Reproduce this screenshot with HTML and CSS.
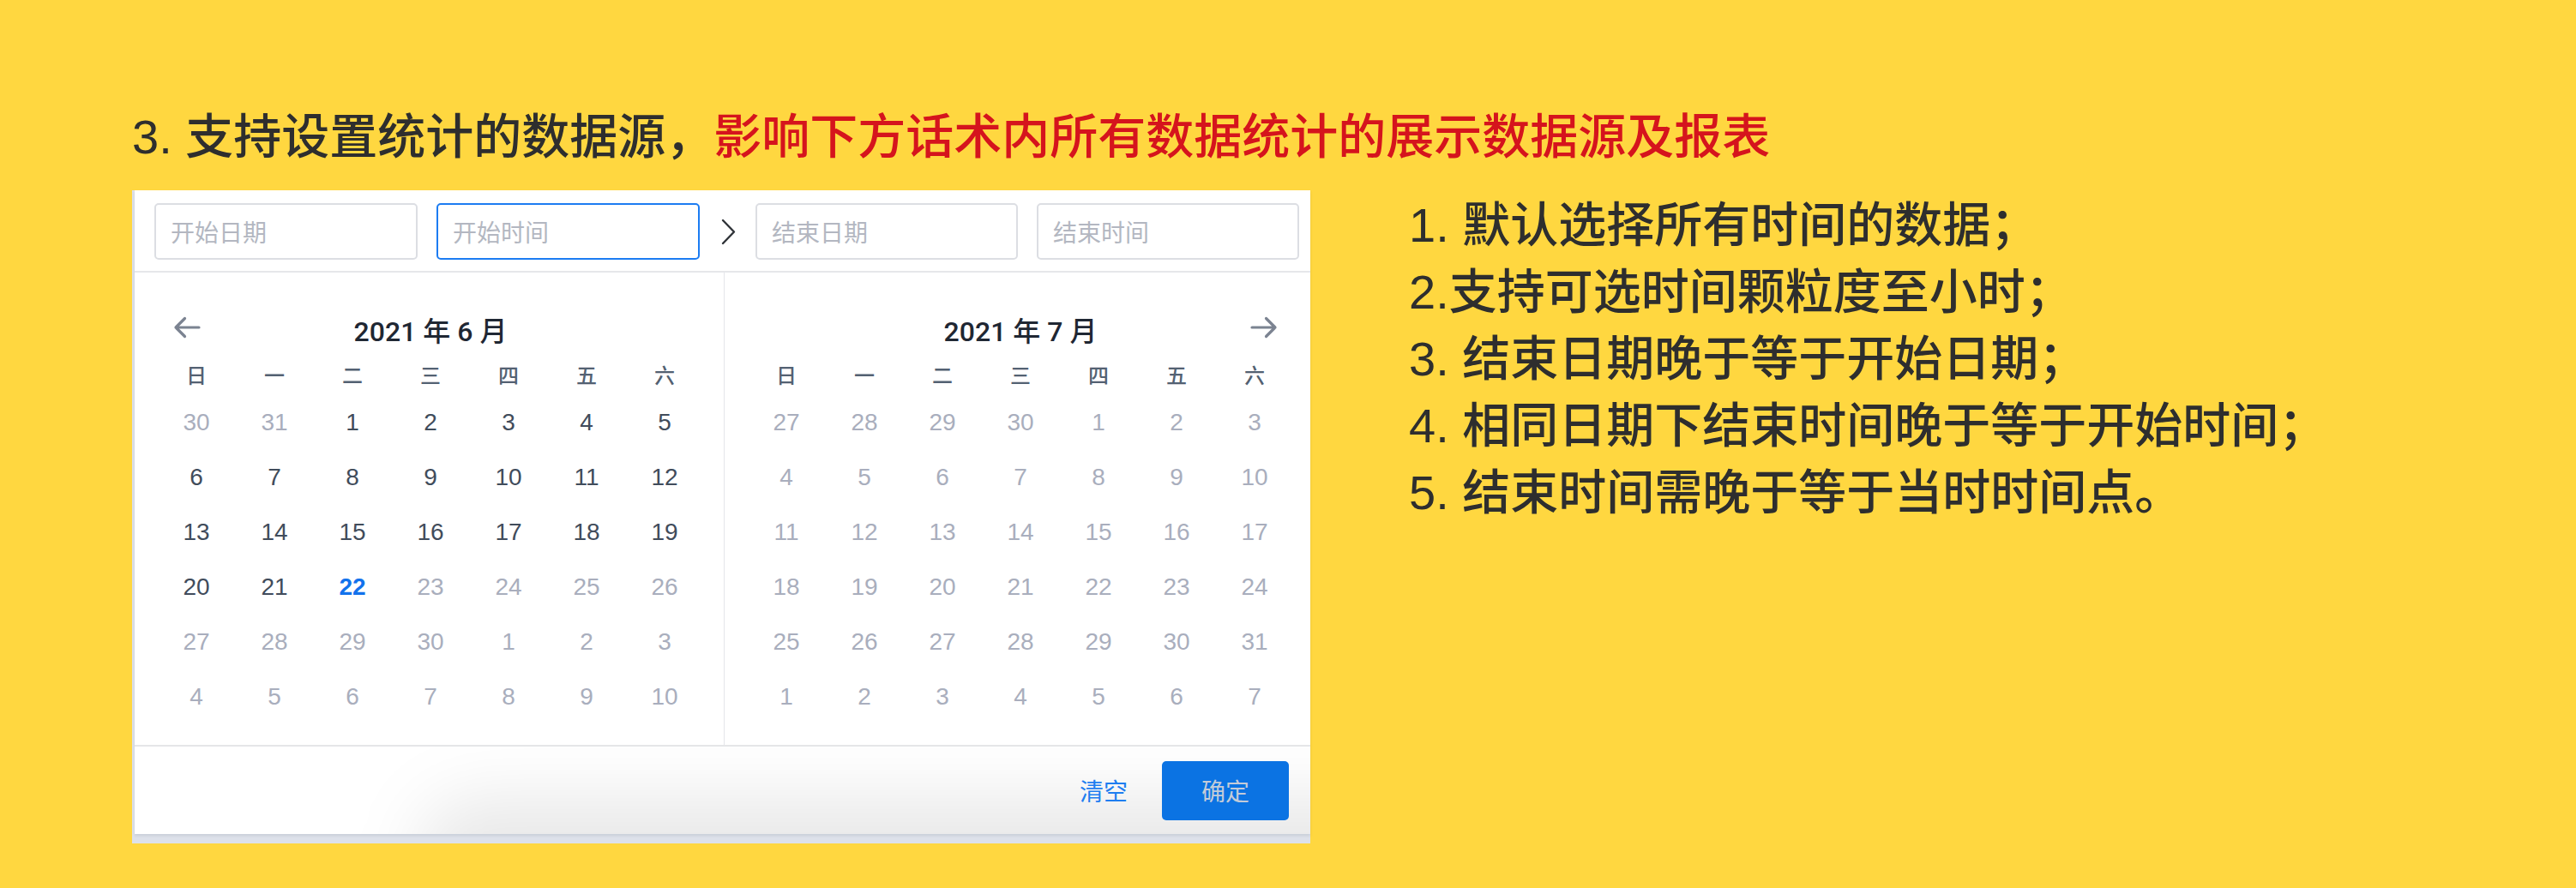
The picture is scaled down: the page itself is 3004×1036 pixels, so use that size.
FILE: index.html
```html
<!DOCTYPE html>
<html lang="zh-CN">
<head>
<meta charset="utf-8">
<title>日期范围选择</title>
<link rel="stylesheet" href="styles.css">
</head>
<body>
<main class="page">
  <h1 class="title">3. 支持设置统计的数据源，<span class="title-red">影响下方话术内所有数据统计的展示数据源及报表</span></h1>
  <div class="row">
    <div class="picker-wrap">
      <div class="picker">
        <div class="picker-head">
          <div class="field">开始日期</div>
          <div class="field field-focus">开始时间</div>
          <div class="sep">
            <svg width="17" height="31" viewBox="0 0 17 31"><path d="M2 2 L15 15.5 L2 29" fill="none" stroke="#2f3338" stroke-width="2.4" stroke-linecap="round" stroke-linejoin="round"/></svg>
          </div>
          <div class="field">结束日期</div>
          <div class="field">结束时间</div>
        </div>
        <div class="picker-body">
          <section class="cal cal-left">
            <div class="month-row">
              <svg class="nav nav-prev" width="32" height="26" viewBox="0 0 32 26"><path d="M30 13 H3 M13.5 2.5 L3 13 L13.5 23.5" fill="none" stroke="#7b8391" stroke-width="3.2" stroke-linecap="round" stroke-linejoin="round"/></svg>
              <div class="month">2021 年 6 月</div>
              <span></span>
            </div>
            <div class="week"><span>日</span><span>一</span><span>二</span><span>三</span><span>四</span><span>五</span><span>六</span></div>
            <div class="days">
              <span class="off">30</span><span class="off">31</span><span>1</span><span>2</span><span>3</span><span>4</span><span>5</span>
              <span>6</span><span>7</span><span>8</span><span>9</span><span>10</span><span>11</span><span>12</span>
              <span>13</span><span>14</span><span>15</span><span>16</span><span>17</span><span>18</span><span>19</span>
              <span>20</span><span>21</span><span class="today">22</span><span class="off">23</span><span class="off">24</span><span class="off">25</span><span class="off">26</span>
              <span class="off">27</span><span class="off">28</span><span class="off">29</span><span class="off">30</span><span class="off">1</span><span class="off">2</span><span class="off">3</span>
              <span class="off">4</span><span class="off">5</span><span class="off">6</span><span class="off">7</span><span class="off">8</span><span class="off">9</span><span class="off">10</span>
            </div>
          </section>
          <section class="cal cal-right">
            <div class="month-row">
              <span></span>
              <div class="month">2021 年 7 月</div>
              <svg class="nav nav-next" width="32" height="26" viewBox="0 0 32 26"><path d="M2 13 H29 M18.5 2.5 L29 13 L18.5 23.5" fill="none" stroke="#7b8391" stroke-width="3.2" stroke-linecap="round" stroke-linejoin="round"/></svg>
            </div>
            <div class="week"><span>日</span><span>一</span><span>二</span><span>三</span><span>四</span><span>五</span><span>六</span></div>
            <div class="days all-off">
              <span>27</span><span>28</span><span>29</span><span>30</span><span>1</span><span>2</span><span>3</span>
              <span>4</span><span>5</span><span>6</span><span>7</span><span>8</span><span>9</span><span>10</span>
              <span>11</span><span>12</span><span>13</span><span>14</span><span>15</span><span>16</span><span>17</span>
              <span>18</span><span>19</span><span>20</span><span>21</span><span>22</span><span>23</span><span>24</span>
              <span>25</span><span>26</span><span>27</span><span>28</span><span>29</span><span>30</span><span>31</span>
              <span>1</span><span>2</span><span>3</span><span>4</span><span>5</span><span>6</span><span>7</span>
            </div>
          </section>
        </div>
        <div class="picker-foot">
          <div class="foot-shade"></div>
          <span class="clear">清空</span>
          <span class="ok">确定</span>
        </div>
      </div>
    </div>
    <ol class="notes">
      <li>1. 默认选择所有时间的数据；</li>
      <li>2.支持可选时间颗粒度至小时；</li>
      <li>3. 结束日期晚于等于开始日期；</li>
      <li>4. 相同日期下结束时间晚于等于开始时间；</li>
      <li>5. 结束时间需晚于等于当时时间点。</li>
    </ol>
  </div>
</main>
</body>
</html>
```

FILE: styles.css
```css
* { box-sizing: border-box; }

html, body {
  margin: 0;
  padding: 0;
  background: #ffd740;
}

body {
  font-family: "Liberation Sans", "Noto Sans CJK SC", sans-serif;
  width: 3004px;
  height: 1036px;
  overflow: hidden;
}

.page {
  padding: 121px 0 0 154px;
}

.title {
  margin: 0 0 23px 0;
  font-size: 56px;
  line-height: 78px;
  font-weight: 500;
  color: #2e2e2e;
  white-space: nowrap;
}

.title-red {
  color: #d5141d;
}

.row {
  display: flex;
  align-items: flex-start;
}

.picker-wrap {
  width: 1374px;
  padding: 0 0 11px 3px;
  background: #dde1ea;
}

.picker {
  width: 1371px;
  background: #ffffff;
  box-shadow: 0 2px 3px rgba(60, 70, 90, 0.12);
  overflow: hidden;
}

.picker-head {
  display: flex;
  align-items: center;
  padding: 15px 0 13px 23px;
  border-bottom: 2px solid #e6e7ea;
}

.field {
  width: 307px;
  height: 66px;
  border: 2px solid #dcdee3;
  border-radius: 5px;
  padding-left: 17px;
  display: flex;
  align-items: center;
  font-size: 28px;
  color: #b3b7c1;
}

.field + .field { margin-left: 22px; }
.sep + .field { width: 306px; }
.sep + .field + .field { width: 306px; }

.field-focus {
  border-color: #1c7cf2;
}

.sep {
  width: 65px;
  display: flex;
  justify-content: center;
  padding-left: 2px;
}

.picker-body {
  display: flex;
}

.cal {
  padding: 41px 0 24px 26.5px;
}

.cal-left {
  width: 688px;
  border-right: 1px solid #e4e6ea;
}

.cal-right {
  flex: 1;
}

.month-row {
  width: 637px;
  height: 50px;
  padding: 0 18.5px;
  display: grid;
  grid-template-columns: 1fr auto 1fr;
  align-items: center;
}

.nav { margin-bottom: 5px; }
.nav-next { justify-self: end; }

.month {
  font-family: Roboto, "Noto Sans CJK SC", sans-serif;
  font-weight: 500;
  font-size: 32px;
  color: #1f2733;
  white-space: nowrap;
}

.week {
  margin-top: 5px;
  height: 44px;
  display: grid;
  grid-template-columns: repeat(7, 91px);
  align-items: center;
  justify-items: center;
  font-size: 24px;
  font-weight: 500;
  color: #536172;
}

.days {
  margin-top: 3px;
  display: grid;
  grid-template-columns: repeat(7, 91px);
  grid-auto-rows: 64px;
  align-items: center;
  justify-items: center;
  font-size: 28px;
  color: #414c5b;
}

.days span { line-height: 64px; }

.days .off,
.all-off span {
  color: #a9aebd;
}

.days .today {
  color: #1272ec;
  font-weight: 700;
}

.picker-foot {
  position: relative;
  height: 104px;
  border-top: 2px solid #e5e6e8;
  display: flex;
  justify-content: flex-end;
  align-items: center;
  padding-right: 25px;
  gap: 40px;
  overflow: hidden;
}

.foot-shade {
  position: absolute;
  left: 330px;
  right: -140px;
  top: 60px;
  bottom: -100px;
  border-radius: 140px;
  background: rgba(0, 0, 0, 0.09);
  filter: blur(40px);
}

.clear {
  position: relative;
  font-size: 28px;
  color: #1e7ef0;
}

.ok {
  position: relative;
  width: 148px;
  height: 69px;
  border-radius: 5px;
  background: #0b73e3;
  color: #c3cbd8;
  font-size: 28px;
  display: flex;
  align-items: center;
  justify-content: center;
}

.notes {
  list-style: none;
  margin: 2px 0 0 115px;
  padding: 0;
  font-size: 56px;
  line-height: 78px;
  font-weight: 500;
  color: #2e2e2e;
  white-space: nowrap;
}
```
